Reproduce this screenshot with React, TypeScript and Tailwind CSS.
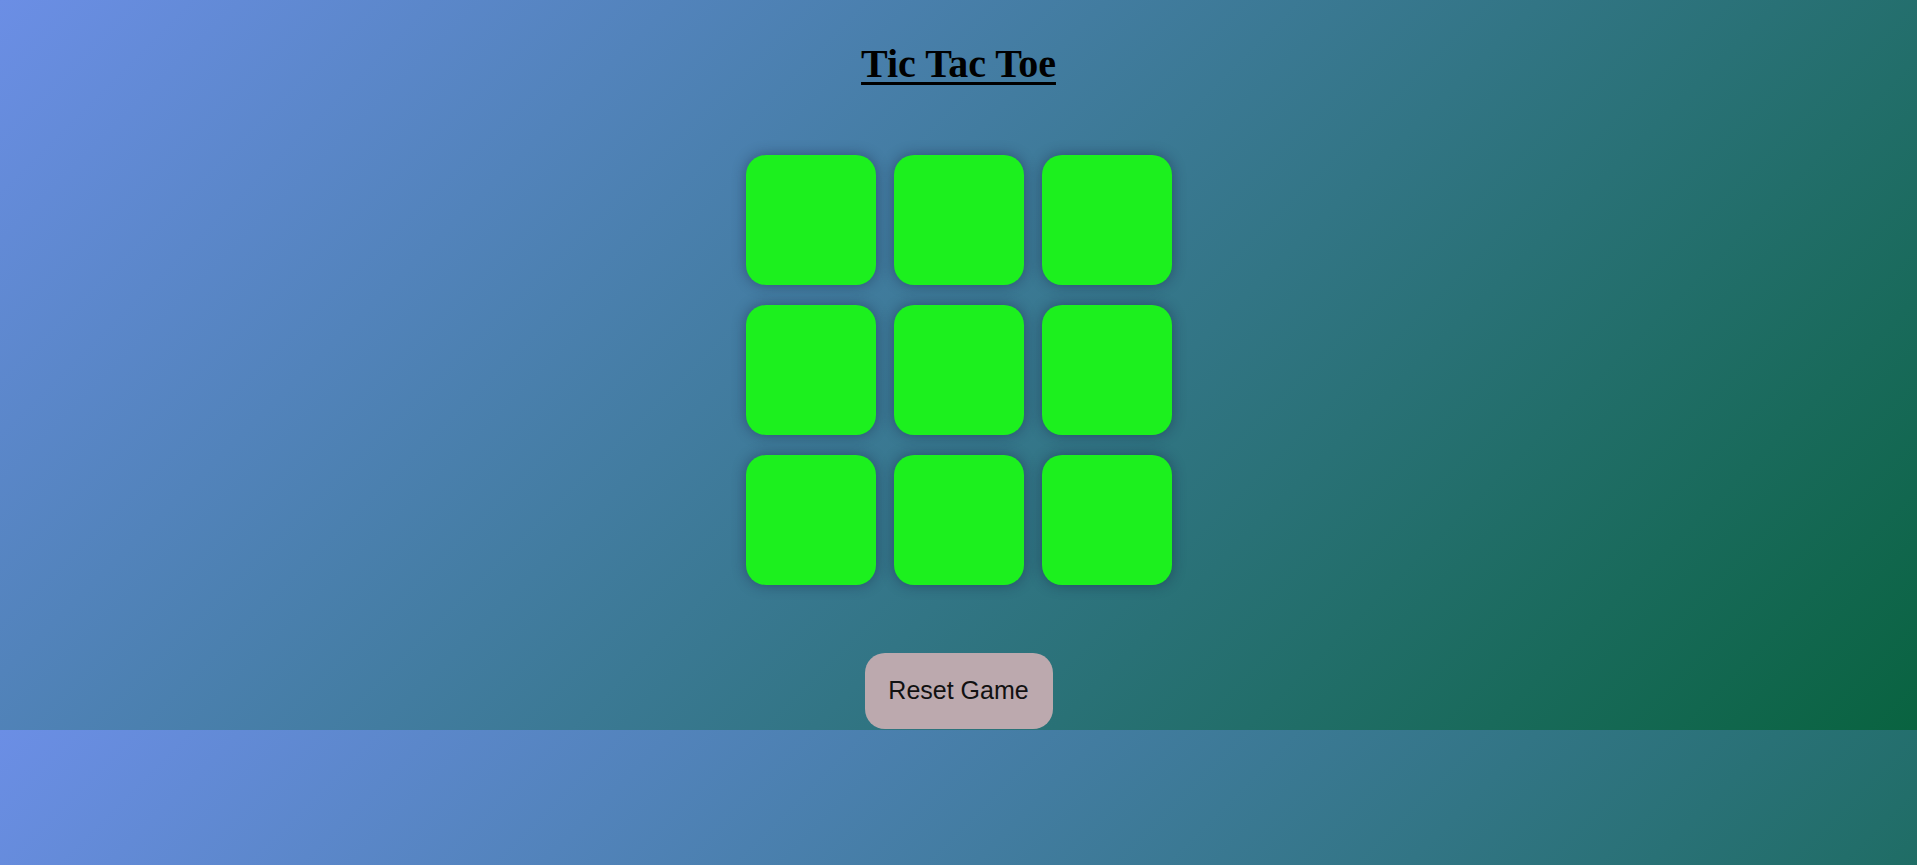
const cells = Array.from({ length: 9 }, (_, i) => i);

export default function App() {
  return (
    <div className="min-h-screen bg-[linear-gradient(135deg,#6b8ee5,#096340)] bg-size-[100%_730px] bg-repeat-y">
      <div className="flex h-[730px] flex-col items-center">
        <h1 className="mt-[43px] font-['Liberation_Serif','Times_New_Roman',serif] text-[40px] font-bold leading-[42px] text-black underline decoration-[3px] underline-offset-[5px]">
          Tic Tac Toe
        </h1>

        <div className="mt-[70px] grid grid-cols-[repeat(3,130px)] gap-x-[18px] gap-y-[20px]">
          {cells.map((i) => (
            <div
              key={i}
              className="h-[130px] w-[130px] rounded-[20px] bg-[#1cf01e] shadow-[0_0_14px_rgba(20,30,60,0.45)]"
            />
          ))}
        </div>

        <button className="mt-[68px] h-[76px] w-[188px] rounded-[20px] bg-[#bca9ae] font-['Liberation_Sans',Arial,sans-serif] text-[25px] text-[#111]">
          Reset Game
        </button>
      </div>
    </div>
  );
}
